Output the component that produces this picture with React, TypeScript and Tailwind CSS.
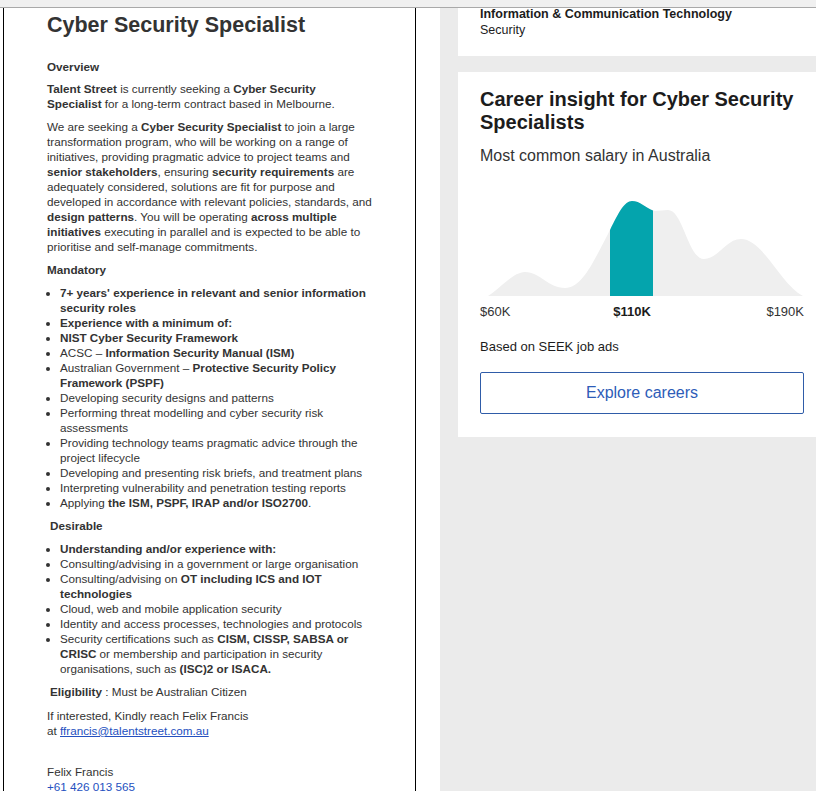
import React from 'react'

const curve =
  'M8,100 C20,93 33,76 45,76 C60,76 68,92 85,92 C103,92 115,62 128,38 C138,18 144,5 152,5 C161,5 166,13 175,15 C180,15 183,14 188,14 C203,14 208,63 224,63 C238,63 246,43 261,43 C283,43 300,88 323,100 Z'

function SalaryChart() {
  return (
    <svg width="324" height="100" viewBox="0 0 324 100" className="block">
      <defs>
        <clipPath id="mostCommon">
          <rect x="130" y="0" width="43" height="100" />
        </clipPath>
      </defs>
      <path d={curve} fill="#efefef" />
      <path d={curve} fill="#04a4ad" clipPath="url(#mostCommon)" />
    </svg>
  )
}

const mandatory: React.ReactNode[] = [
  <b>7+ years' experience in relevant and senior information security roles</b>,
  <b>Experience with a minimum of:</b>,
  <b>NIST Cyber Security Framework</b>,
  <>ACSC – <b>Information Security Manual (ISM)</b></>,
  <>Australian Government – <b>Protective Security Policy Framework (PSPF)</b></>,
  <>Developing security designs and patterns</>,
  <>Performing threat modelling and cyber security risk assessments</>,
  <>Providing technology teams pragmatic advice through the project lifecycle</>,
  <>Developing and presenting risk briefs, and treatment plans</>,
  <>Interpreting vulnerability and penetration testing reports</>,
  <>Applying <b>the ISM, PSPF, IRAP and/or ISO2700</b>.</>,
]

const desirable: React.ReactNode[] = [
  <b>Understanding and/or experience with:</b>,
  <>Consulting/advising in a government or large organisation</>,
  <>Consulting/advising on <b>OT including ICS and IOT technologies</b></>,
  <>Cloud, web and mobile application security</>,
  <>Identity and access processes, technologies and protocols</>,
  <>Security certifications such as <b>CISM, CISSP, SABSA or CRISC</b> or membership and participation in security organisations, such as <b>(ISC)2 or ISACA.</b></>,
]

export default function App() {
  return (
    <div className="relative flex h-[791px] overflow-hidden bg-white font-['Liberation_Sans',Arial,sans-serif]">
      <div className="absolute left-0 right-0 top-0 h-[8px] border-b border-[#a9a9a9] bg-[#f0f0f0]" />

      {/* job description */}
      <div className="w-[440px] shrink-0 bg-white">
        <div className="ml-[3px] h-full w-[413px] border-x border-black pl-[43px] text-[11.7px] leading-[15px] text-[#333]">
          <div className="w-[326.5px]">
            <h1 className="pt-[12px] text-[21.5px] font-bold leading-[26px] text-[#333]">Cyber Security Specialist</h1>
            <p className="mt-[21px] font-bold">Overview</p>
            <p className="mt-[7px]">
              <b>Talent Street</b> is currently seeking a <b>Cyber Security Specialist</b> for a long-term contract based in Melbourne.
            </p>
            <p className="mt-[8px]">
              We are seeking a <b>Cyber Security Specialist</b> to join a large transformation program, who will be working on a range of
              initiatives, providing pragmatic advice to project teams and <b>senior stakeholders</b>, ensuring <b>security requirements</b> are
              adequately considered, solutions are fit for purpose and developed in accordance with relevant policies, standards, and{' '}
              <b>design patterns</b>. You will be operating <b>across multiple initiatives</b> executing in parallel and is expected to be able to
              prioritise and self-manage commitments.
            </p>
            <p className="mt-[8px] font-bold">Mandatory</p>
            <ul className="mt-[8px] list-disc pl-[13px]">
              {mandatory.map((item, i) => (
                <li key={i}>{item}</li>
              ))}
            </ul>
            <p className="mt-[8px] pl-[3px] font-bold">Desirable</p>
            <ul className="mt-[8px] list-disc pl-[13px]">
              {desirable.map((item, i) => (
                <li key={i}>{item}</li>
              ))}
            </ul>
            <p className="mt-[8px] pl-[3px]">
              <b>Eligibility</b> : Must be Australian Citizen
            </p>
            <p className="mt-[9px]">
              If interested, Kindly reach Felix Francis
              <br />
              at <a className="text-[#2450c0] underline">ffrancis@talentstreet.com.au</a>
            </p>
            <p className="mt-[26px]">
              Felix Francis
              <br />
              <a className="text-[#2450c0] underline">+61 426 013 565</a>
            </p>
          </div>
        </div>
      </div>

      {/* sidebar */}
      <div className="flex-1 bg-[#ebebeb] pl-[18px]">
        <div className="w-[358px] bg-white pb-[18px] pl-[22px] pr-[12px] pt-[6px] text-[12.5px] leading-[16px] text-[#1c1c1c]">
          <p className="font-bold">Information &amp; Communication Technology</p>
          <p>Security</p>
        </div>

        <div className="mt-[16px] w-[358px] bg-white pb-[23px] pl-[22px] pr-[12px] pt-[16px] text-[#1c1c1c]">
          <h2 className="text-[20px] font-bold leading-[23px]">Career insight for Cyber Security Specialists</h2>
          <p className="mt-[12px] text-[16px] leading-[20px] text-[#333]">Most common salary in Australia</p>
          <div className="mt-[30px]">
            <SalaryChart />
          </div>
          <div className="relative mt-[8px] flex justify-between text-[13px] leading-[16px] text-[#333]">
            <span>$60K</span>
            <span className="absolute left-[152px] top-0 -translate-x-1/2 font-bold text-[#1c1c1c]">$110K</span>
            <span>$190K</span>
          </div>
          <p className="mt-[19px] text-[13px] leading-[16px] text-[#1c1c1c]">Based on SEEK job ads</p>
          <button className="mt-[17px] flex h-[42px] w-[324px] items-center justify-center rounded-[2px] border border-[#2f5ca8] text-[16px] text-[#2d5cb8]">
            Explore careers
          </button>
        </div>
      </div>
    </div>
  )
}
